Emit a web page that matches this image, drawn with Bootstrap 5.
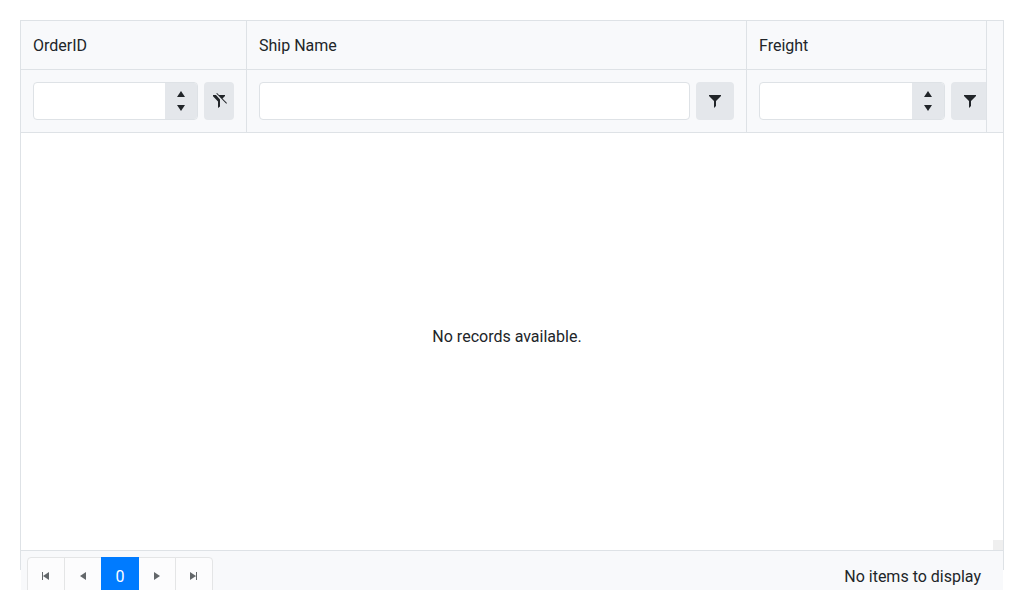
<!DOCTYPE html>
<html lang="en">
<head>
<meta charset="utf-8">
<meta name="viewport" content="width=device-width, initial-scale=1">
<title>Orders</title>
<link rel="stylesheet" href="https://cdn.jsdelivr.net/npm/bootstrap@5.3.0/dist/css/bootstrap.min.css">
<style>
  :root { --line: #dee2e6; --panel: #f8f9fb; --fill: #e4e7eb; }
  body { font-family: Roboto, sans-serif; font-size: 16px; line-height: 24px; color: #212529; background: #fff; }
  .page { height: 100vh; padding: 20px; overflow: hidden; }
  .data-grid { height: 100%; border: 1px solid var(--line); }
  .grid-head { background: var(--panel); border-bottom: 1px solid var(--line); padding-right: 16px; }
  .head-wrap { border-right: 1px solid var(--line); overflow: hidden; }
  .head-table { table-layout: fixed; width: calc(100% + 15px); border-collapse: separate; border-spacing: 0; }
  .head-table th, .head-table td { padding: 12px; font-weight: 400; border-right: 1px solid var(--line); }
  .head-table th { padding: 13px 12px 11px; border-bottom: 1px solid var(--line); }
  .head-table th:last-child, .head-table td:last-child { border-right: 0; }
  .col-id { width: 226px; }
  .col-ship { width: 500px; }
  .filter-line { display: flex; gap: 6px; }
  .numeric { height: 38px; border: 1px solid var(--line); border-radius: 4px; background: #fff; overflow: hidden; }
  .numeric input { border: 0; background: transparent; padding: 6px 12px; outline: 0; }
  .spinner { width: 32px; background: var(--fill); }
  .spinner button { flex: 1; border: 0; padding: 0; background: transparent; color: inherit; line-height: 0; }
  .text-filter { height: 38px; border-color: var(--line); border-radius: 4px; }
  .tool { width: 38px; height: 38px; padding: 0; border: 0; border-radius: 4px; background: var(--fill); color: #212529; }
  .tool:hover { background: #dadee3; }
  .tool-narrow { width: 30px; }
  .grid-body { display: grid; grid-template: 1fr 10px / 1fr 10px; min-height: 417px; }
  .corner { grid-area: 2 / 2; background: #efefef; }
  .pager { background: var(--panel); border-top: 1px solid var(--line); padding: 6px 22px 6px 6px; }
  .pager .page-link { width: 38px; height: 38px; padding: 0; border-color: #e4e5e6; background: #fcfcfd; color: #63676a; border-radius: 0; }
  .pager .page-item:first-child .page-link { border-radius: 4px 0 0 4px; }
  .pager .page-item:last-child .page-link { border-radius: 0 4px 4px 0; }
  .pager .active .page-link { background: #007bff; border-color: #007bff; color: #fff; }
  .pager .active .page-link, .pager-info { padding-top: 2px; }
  svg { fill: currentColor; }
</style>
</head>
<body>
<main class="page">
  <div class="data-grid d-flex flex-column">
    <div class="grid-head flex-shrink-0">
      <div class="head-wrap">
        <table class="head-table">
          <colgroup><col class="col-id"><col class="col-ship"><col></colgroup>
          <thead>
            <tr><th scope="col">OrderID</th><th scope="col">Ship Name</th><th scope="col">Freight</th></tr>
            <tr>
              <td>
                <div class="filter-line">
                  <div class="numeric d-flex flex-fill">
                    <input class="w-100" type="text" inputmode="numeric" aria-label="OrderID filter">
                    <span class="spinner d-flex flex-column flex-shrink-0">
                      <button type="button" aria-label="Increase value"><svg width="16" height="18"><path d="M8 8l4 6H4z"/></svg></button>
                      <button type="button" aria-label="Decrease value"><svg width="16" height="18"><path d="M8 10l4-6H4z"/></svg></button>
                    </span>
                  </div>
                  <button type="button" class="tool tool-narrow d-flex align-items-center justify-content-center flex-shrink-0" aria-label="Clear filter">
                    <svg width="16" height="16" viewBox="0 0 16 16"><path d="M2 2h3l4 4.500v7L7 15V8.500L2 3.200zM8 2h6v1l-2.500 2.500zM5.300.6L6 0l10 10-.7.7z"/></svg>
                  </button>
                </div>
              </td>
              <td>
                <div class="filter-line">
                  <input class="form-control text-filter" type="text" aria-label="Ship Name filter">
                  <button type="button" class="tool d-flex align-items-center justify-content-center flex-shrink-0" aria-label="Filter Ship Name">
                    <svg width="16" height="16" viewBox="0 0 16 16"><path d="M2 2v1l5 5v7l2-2V8l5-5V2z"/></svg>
                  </button>
                </div>
              </td>
              <td>
                <div class="filter-line">
                  <div class="numeric d-flex flex-fill">
                    <input class="w-100" type="text" inputmode="decimal" aria-label="Freight filter">
                    <span class="spinner d-flex flex-column flex-shrink-0">
                      <button type="button" aria-label="Increase value"><svg width="16" height="18"><path d="M8 8l4 6H4z"/></svg></button>
                      <button type="button" aria-label="Decrease value"><svg width="16" height="18"><path d="M8 10l4-6H4z"/></svg></button>
                    </span>
                  </div>
                  <button type="button" class="tool d-flex align-items-center justify-content-center flex-shrink-0" aria-label="Filter Freight">
                    <svg width="16" height="16" viewBox="0 0 16 16"><path d="M2 2v1l5 5v7l2-2V8l5-5V2z"/></svg>
                  </button>
                </div>
              </td>
            </tr>
          </thead>
        </table>
      </div>
    </div>
    <div class="grid-body flex-grow-1 flex-shrink-0">
      <div class="d-flex align-items-center justify-content-center">No records available.</div>
      <span class="corner"></span>
    </div>
    <nav class="pager d-flex align-items-center justify-content-between flex-shrink-0" aria-label="Grid pages">
      <ul class="pagination mb-0">
        <li class="page-item"><button type="button" class="page-link d-flex align-items-center justify-content-center" aria-label="First page"><svg width="16" height="16"><path d="M4 4h1v8H4zM11 4v8L5 8z"/></svg></button></li>
        <li class="page-item"><button type="button" class="page-link d-flex align-items-center justify-content-center" aria-label="Previous page"><svg width="16" height="16"><path d="M11 4v8L5 8z"/></svg></button></li>
        <li class="page-item active"><button type="button" class="page-link d-flex align-items-center justify-content-center" aria-current="page">0</button></li>
        <li class="page-item"><button type="button" class="page-link d-flex align-items-center justify-content-center" aria-label="Next page"><svg width="16" height="16"><path d="M5 4v8l6-4z"/></svg></button></li>
        <li class="page-item"><button type="button" class="page-link d-flex align-items-center justify-content-center" aria-label="Last page"><svg width="16" height="16"><path d="M4 4v8l6-4zM10 4h1v8h-1z"/></svg></button></li>
      </ul>
      <span class="pager-info">No items to display</span>
    </nav>
  </div>
</main>
<script src="https://cdn.jsdelivr.net/npm/bootstrap@5.3.0/dist/js/bootstrap.bundle.min.js"></script>
</body>
</html>
